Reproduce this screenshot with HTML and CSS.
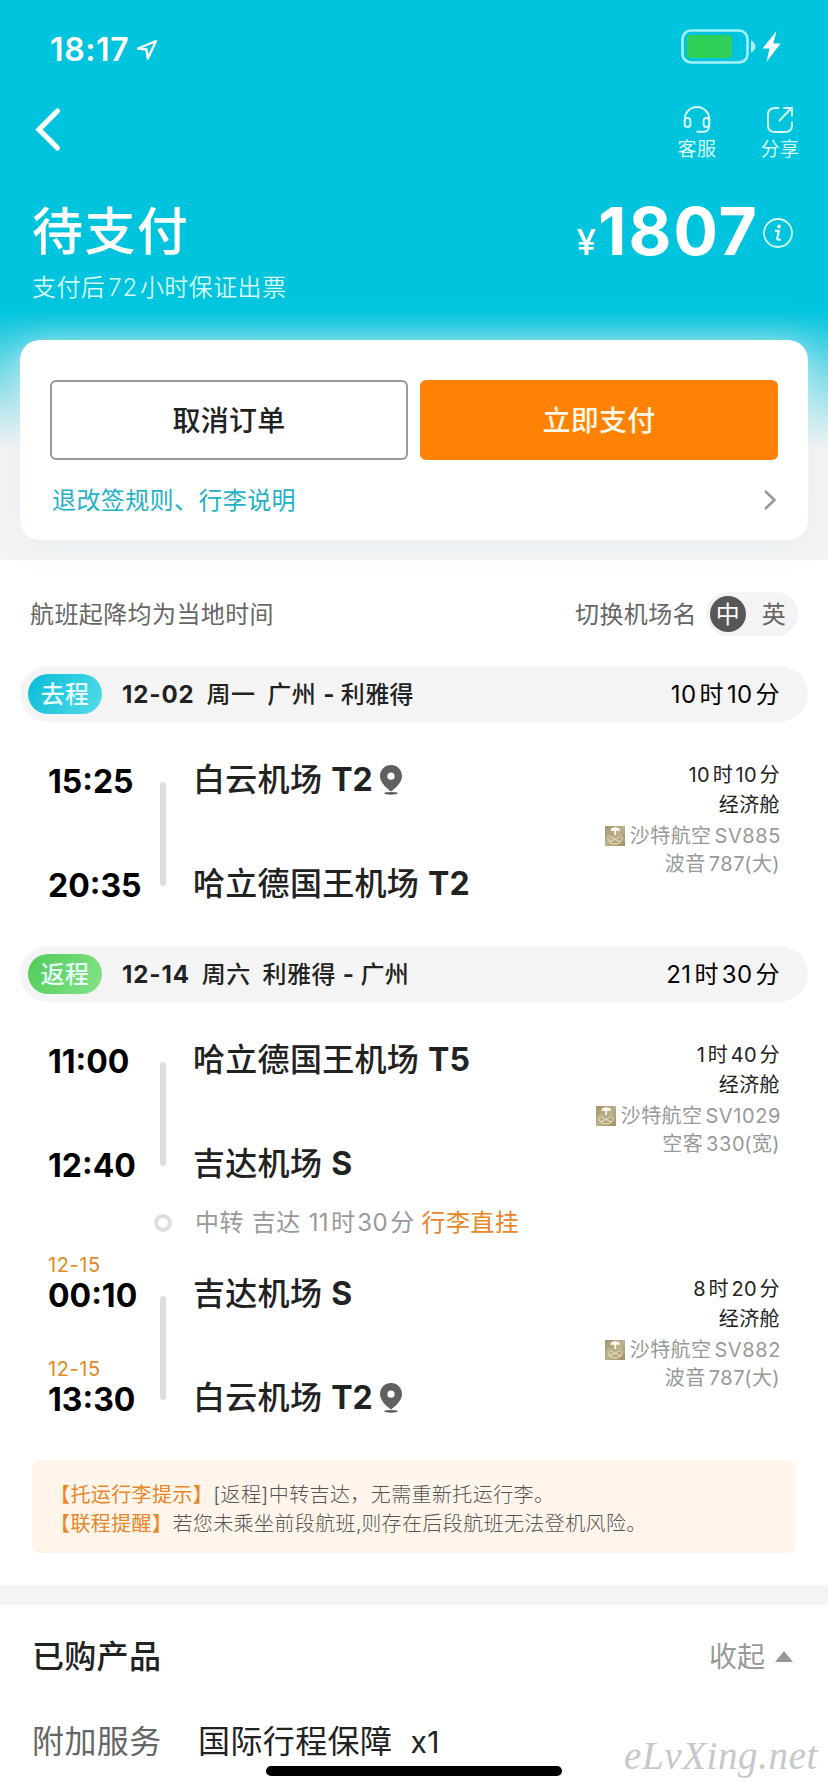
FILE: index.html
```html
<!DOCTYPE html>
<html lang="zh-CN">
<head>
<meta charset="utf-8">
<title>待支付</title>
<link rel="stylesheet" href="styles.css">
</head>
<body>
<svg class="defs" width="0" height="0" aria-hidden="true">
  <defs>
    <linearGradient id="gold" x1="0" y1="0" x2="1" y2="1"><stop offset="0" stop-color="#a3966d"/><stop offset=".5" stop-color="#bdb18c"/><stop offset="1" stop-color="#a0915f"/></linearGradient>
    <symbol id="saudia" viewBox="0 0 20 20">
      <rect width="20" height="20" fill="url(#gold)"/>
      <path d="M5.800 5.200C5 3 7 1.400 8.300 1.900 9.300.800 11 .8 12 1.900 14 1.500 15.400 3.500 14.400 5.300 13.300 4.500 12 4.800 10.900 5L11.100 9H9.500L9.300 5C8 4.600 6.800 4.600 5.800 5.200Z" fill="#fffdf3"/>
      <path d="M3.500 9C6 12 10 13.500 15.500 16M16.500 9C14 12 10 13.500 4.500 16M2.800 11C2.800 15.500 6 18 10 18S17.200 15.500 17.200 11" fill="none" stroke="#eee7cf" stroke-width="1"/>
    </symbol>
    <symbol id="pin" viewBox="0 0 22 30">
      <path fill-rule="evenodd" d="M11 0C4.900 0 0 4.900 0 11C0 17 5 22 11 26.500C17 22 22 17 22 11C22 4.900 17.100 0 11 0ZM11 7.600A3.600 3.600 0 1 1 11 14.800A3.600 3.600 0 1 1 11 7.600Z" fill="#606060"/>
      <ellipse cx="11" cy="28.300" rx="6.800" ry="1.400" fill="#606060"/>
    </symbol>
  </defs>
</svg>
<div class="page">
  <header class="hero">
    <div class="status">
      <span class="clock">18:17</span>
      <svg class="loc" width="22" height="22" viewBox="0 0 22 22"><path d="M20 2L2 9.500L10.500 10.500L11.800 19.500Z" fill="none" stroke="#fff" stroke-width="2.400" stroke-linejoin="round"/></svg>
      <svg class="battery" width="102" height="38" viewBox="0 0 102 38">
        <rect x="1.500" y="1.500" width="65" height="32" rx="8.500" fill="none" stroke="#a5f1f7" stroke-width="2.600"/>
        <rect x="6" y="6" width="45" height="23" rx="4" fill="#30d158"/>
        <path d="M70 11.500C76 13.500 76 21.500 70 23.500Z" fill="#a5f1f7"/>
        <path d="M95.500 2L81.500 19.500H88.500L85.500 33L99.500 14.500H92.300Z" fill="#fff"/>
      </svg>
    </div>
    <nav class="nav">
      <svg class="back" width="28" height="46" viewBox="0 0 28 46"><path d="M23.500 4L5 22.500L23.500 41" fill="none" stroke="#fff" stroke-width="5.200" stroke-linecap="round" stroke-linejoin="miter"/></svg>
      <a class="tool">
        <svg width="28" height="28" viewBox="0 0 28 28" fill="none" stroke="#d5fbfd" stroke-width="2" stroke-linecap="round" stroke-linejoin="round"><path d="M1.800 16V13A12.200 12 0 0 1 26.200 13V20C26.200 24 23 25.800 20 25.800H14.300"/><rect x="1.600" y="12" width="5.800" height="9" rx="2.800"/><rect x="20.600" y="12" width="5.600" height="9" rx="2.800"/></svg>
        <span>客服</span>
      </a>
      <a class="tool">
        <svg width="28" height="28" viewBox="0 0 28 28" fill="none" stroke="#d5fbfd" stroke-width="2" stroke-linecap="round" stroke-linejoin="round"><path d="M13.500 14.500L25.500 2M18 2H26V9.500M12.500 2H9Q2 2 2 9V19Q2 26 9 26H19Q26 26 26 19V16.500"/></svg>
        <span>分享</span>
      </a>
    </nav>
    <div class="summary">
      <div>
        <h1 class="title">待支付</h1>
        <p class="sub">支付后<b class="n">72</b>小时保证出票</p>
      </div>
      <div class="price">
        <span class="yen">¥</span><span class="amount">1807</span>
        <svg class="info" width="30" height="30" viewBox="0 0 30 30"><circle cx="15" cy="15" r="14" fill="none" stroke="#d5fbfd" stroke-width="1.800"/><circle cx="16" cy="8.400" r="1.900" fill="#e8feff"/><path d="M12 12.800H15.800L14.300 20.500Q14 22.300 18 21.500" fill="none" stroke="#e8feff" stroke-width="2.200"/></svg>
      </div>
    </div>
    <section class="card">
      <div class="buttons">
        <button class="btn">取消订单</button>
        <button class="btn btn-pay">立即支付</button>
      </div>
      <a class="rules"><span>退改签规则、行李说明</span>
        <svg width="14" height="22" viewBox="0 0 14 22"><path d="M2 2L11.500 11L2 20" fill="none" stroke="#999" stroke-width="2.600"/></svg>
      </a>
    </section>
  </header>

  <main class="flights">
    <div class="tips">
      <span>航班起降均为当地时间</span>
      <span class="switch-label">切换机场名</span>
      <div class="switch"><span class="opt on">中</span><span class="opt">英</span></div>
    </div>

    <div class="leg">
      <span class="badge go">去程</span>
      <span class="route"><b>12-02</b><span>周一</span><span>广州<i>-</i>利雅得</span></span>
      <span class="total">10<em>时</em>10<em>分</em></span>
    </div>
    <div class="segment">
      <div class="times"><div class="time">15:25</div><div class="time">20:35</div></div>
      <div class="bar"></div>
      <div class="airports"><div class="airport">白云机场<b>T2</b><svg width="22" height="30"><use href="#pin"/></svg></div><div class="airport">哈立德国王机场<b>T2</b></div></div>
      <div class="meta">
        <p>10<em>时</em>10<em>分</em></p><p>经济舱</p>
        <p class="dim"><svg width="20" height="20"><use href="#saudia"/></svg>沙特航空<b class="n">SV885</b></p>
        <p class="dim">波音<b class="n">787</b>(大)</p>
      </div>
    </div>

    <div class="leg">
      <span class="badge ret">返程</span>
      <span class="route"><b>12-14</b><span>周六</span><span>利雅得<i>-</i>广州</span></span>
      <span class="total">21<em>时</em>30<em>分</em></span>
    </div>
    <div class="segment">
      <div class="times"><div class="time">11:00</div><div class="time">12:40</div></div>
      <div class="bar"></div>
      <div class="airports"><div class="airport">哈立德国王机场<b>T5</b></div><div class="airport">吉达机场<b>S</b></div></div>
      <div class="meta">
        <p>1<em>时</em>40<em>分</em></p><p>经济舱</p>
        <p class="dim"><svg width="20" height="20"><use href="#saudia"/></svg>沙特航空<b class="n">SV1029</b></p>
        <p class="dim">空客<b class="n">330</b>(宽)</p>
      </div>
    </div>
    <div class="transfer">
      <span class="ring"></span>
      <span>中转</span><span>吉达</span><span>11<em>时</em>30<em>分</em></span><span class="through">行李直挂</span>
    </div>
    <div class="segment last">
      <div class="times"><div class="time"><small>12-15</small>00:10</div><div class="time"><small>12-15</small>13:30</div></div>
      <div class="bar"></div>
      <div class="airports"><div class="airport">吉达机场<b>S</b></div><div class="airport">白云机场<b>T2</b><svg width="22" height="30"><use href="#pin"/></svg></div></div>
      <div class="meta">
        <p>8<em>时</em>20<em>分</em></p><p>经济舱</p>
        <p class="dim"><svg width="20" height="20"><use href="#saudia"/></svg>沙特航空<b class="n">SV882</b></p>
        <p class="dim">波音<b class="n">787</b>(大)</p>
      </div>
    </div>

    <div class="notice">
      <p><strong>【托运行李提示】</strong>[返程]中转吉达，无需重新托运行李。</p>
      <p><strong>【联程提醒】</strong>若您未乘坐前段航班<span class="comma">,</span>则存在后段航班无法登机风险。</p>
    </div>
  </main>

  <section class="products">
    <div class="products-head"><h2>已购产品</h2><span class="fold">收起</span><span class="tri"></span></div>
    <div class="product"><span class="kind">附加服务</span><span>国际行程保障</span><span class="qty">x1</span></div>
  </section>
  <div class="watermark">eLvXing.net</div>
  <div class="home"></div>
</div>
</body>
</html>
```
FILE: styles.css
```css
* { box-sizing: border-box; margin: 0; padding: 0; }
body {
  font-family: Inter, "Noto Sans CJK SC", sans-serif;
  text-autospace: no-autospace;
  color: #222;
  background: #fff;
}
.defs { display: block; height: 0; }
.page { position: relative; width: 828px; height: 1792px; overflow: hidden; background: #fff; }
svg { flex: none; display: block; }
em, i { font-style: normal; }
span, p, h1, h2, button { white-space: nowrap; }
.n { font-weight: inherit; margin: 0 2px 0 3px; letter-spacing: .8px; }

/* header */
.hero {
  height: 560px;
  padding-top: 27px;
  background: linear-gradient(#00c4de 0, #00c4de 310px, #f4f4f4 448px);
}
.status { display: flex; height: 45px; padding: 0 45px 0 50px; color: #fff; }
.clock { font-size: 32px; font-weight: 600; line-height: 46px; letter-spacing: .6px; }
.loc { margin: 12px 0 0 7px; }
.battery { margin: 2px 0 0 auto; }
.nav { display: flex; height: 118px; padding: 34px 28px 0 34px; color: #d5fbfd; }
.back { margin: 1px auto 0 0; }
.tool { display: flex; flex-direction: column; align-items: center; width: 40px; margin-left: 43px; font-size: 19px; letter-spacing: .5px; line-height: 26px; }
.tool span { margin-top: 3px; }
.summary { display: flex; justify-content: space-between; padding: 0 35px 0 32px; height: 150px; color: #fff; }
.title { font-size: 51px; letter-spacing: 1.400px; line-height: 83px; font-weight: 500; }
.sub { font-size: 24px; letter-spacing: .4px; line-height: 34px; color: #d5fbfd; font-weight: 350; margin-top: -2px; }
.price { display: flex; }
.yen { font-size: 35px; font-weight: 500; line-height: 40px; margin: 32px 2px 0 0; }
.amount { font-size: 66px; font-weight: 700; line-height: 83px; letter-spacing: 2px; }
.info { margin: 28px 0 0 4px; }
.card {
  margin: 0 20px; height: 200px; padding: 40px 30px 0; border-radius: 20px; background: #fff;
  box-shadow: 0 4px 36px rgba(226, 235, 240, .75);
}
.buttons { display: grid; grid-template-columns: 1fr 1fr; gap: 12px; }
.btn { height: 80px; padding-top: 2px; border: 2px solid #999; border-radius: 6px; background: #fff; color: #222; font: inherit; font-size: 28px; line-height: 40px; letter-spacing: .2px; font-weight: 500; }
.btn-pay { border: 0; background: #ff8205; color: #fff7e5; }
.rules { display: flex; justify-content: space-between; align-items: center; height: 80px; padding: 0 1px 0 2px; font-size: 24px; line-height: 36px; letter-spacing: .4px; color: #1fb1c6; }
.rules span { padding-top: 1px; }

/* flights */
.flights { height: 1025px; }
.tips { display: flex; align-items: center; height: 106px; padding: 2px 30px 0; font-size: 24px; line-height: 36px; letter-spacing: .4px; color: #666; }
.tips > span { padding-top: 1px; }
.switch-label { margin-left: auto; }
.switch { display: flex; align-items: center; width: 92px; height: 44px; margin-left: 9px; padding: 0 4px; border-radius: 22px; background: #f4f4f4; }
.opt { width: 36px; height: 36px; line-height: 38px; text-align: center; border-radius: 50%; }
.opt + .opt { margin-left: 10px; }
.on { background: #575757; color: #fff; }
.leg { display: flex; align-items: center; height: 56px; margin: 0 20px; padding: 0 28px 0 8px; border-radius: 28px; background: #f4f4f4; font-size: 24px; line-height: 36px; letter-spacing: .4px; }
.badge { width: 74px; height: 40px; line-height: 41px; border-radius: 20px; text-align: center; color: #eaffff; font-weight: 500; }
.go { background: linear-gradient(120deg, #08bcd6, #55dcea); }
.ret { background: linear-gradient(120deg, #4fcb57, #86e389); }
.route { display: flex; margin-left: 20px; gap: 12px; padding-top: 1px; font-weight: 500; }
.route b { font-weight: 700; letter-spacing: .9px; }
.route i { margin: 0 6px 0 7px; font-weight: 700; }
.total { margin-left: auto; padding-top: 1px; color: #000; }
.total em, .meta em { margin: 0 3px; }
.meta em { margin: 0 2.500px; }
.transfer em { margin: 0 2px; }
.total em:last-child, .meta em:last-child, .transfer em:last-child { margin-right: 0; }
.segment { display: flex; height: 224px; padding: 36px 48px 0 48px; }
.times { width: 112px; color: #000; font-size: 32px; font-weight: 700; }
.time, .airport { position: relative; height: 44px; line-height: 48px; margin-bottom: 60px; }
.time small { position: absolute; left: 0; bottom: 39px; font-size: 20px; line-height: 24px; font-weight: 400; letter-spacing: .6px; color: #e08a2a; }
.bar { width: 6px; height: 104px; margin-top: 24px; border-radius: 3px; background: #dedede; }
.airports { flex: 1; margin-left: 27px; font-size: 32px; letter-spacing: .3px; font-weight: 500; }
.airport { display: flex; align-items: center; white-space: nowrap; }
.airport b { margin-left: 9px; font-weight: 700; letter-spacing: 0; }
.airport svg { margin-left: 7px; }
.meta { text-align: right; font-size: 20px; letter-spacing: .4px; line-height: 30px; padding-top: 2px; }
.meta p { display: flex; justify-content: flex-end; align-items: center; height: 30px; }
.meta p + p + p { height: 31px; }
.meta p + p + p + p { height: 26px; }
.dim { color: #999; }
.dim svg { margin-right: 5px; }
.meta .n:last-child { margin-right: -1px; letter-spacing: .6px; }
.transfer { display: flex; align-items: center; height: 24px; margin-top: -15px; padding-left: 154px; gap: 8px; font-size: 24px; line-height: 34px; letter-spacing: .4px; color: #999; }
.ring { width: 18px; height: 18px; margin-right: 15px; border: 4px solid #dedede; border-radius: 50%; }
.transfer .through { margin-left: -1px; color: #e8862a; }
.last { height: 225px; padding-top: 37px; }
.notice { height: 93px; margin: 0 32px; padding: 21px 18px 0; border-radius: 8px; background: #fff5ea; font-size: 20px; letter-spacing: .4px; line-height: 29px; color: #555; font-weight: 300; }
.notice strong { color: #e8862a; font-weight: 400; }
.comma { letter-spacing: -.5px; }

/* purchased products */
.products { border-top: 20px solid #f4f4f4; padding: 0 35px 0 32px; }
.products-head { display: flex; align-items: center; height: 103px; }
.products-head h2 { font-size: 32px; letter-spacing: .3px; line-height: 44px; font-weight: 500; }
.fold { margin-left: auto; font-size: 28px; line-height: 40px; color: #999; }
.tri { margin-left: 10px; border: 9px solid transparent; border-top: 0; border-bottom: 11px solid #999; }
.product { display: flex; font-size: 32px; letter-spacing: .4px; line-height: 46px; margin-top: 11px; }
.kind { width: 166px; color: #666; }
.qty { margin-left: 18px; font-size: 30px; }
.watermark { position: absolute; right: 10px; top: 1735px; font: italic 39px/42px "Liberation Serif", serif; letter-spacing: .6px; color: #c8c8c8; }
.home { position: absolute; left: 266px; top: 1766px; width: 296px; height: 10px; border-radius: 5px; background: #000; }
```
